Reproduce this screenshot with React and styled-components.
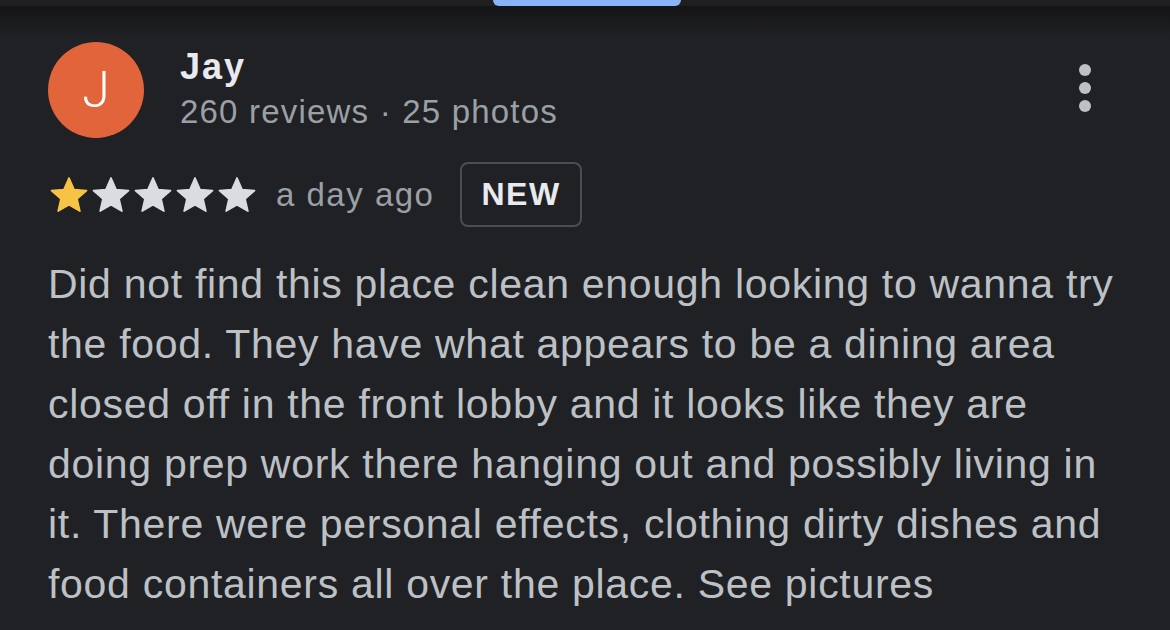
import React from 'react'
import styled, { createGlobalStyle } from 'styled-components'

const GlobalStyle = createGlobalStyle`
  html, body {
    margin: 0;
    padding: 0;
    background: #202124;
  }
  body {
    width: 1170px;
    height: 630px;
    overflow: hidden;
  }
`

const Page = styled.div`
  width: 1170px;
  height: 630px;
  background: #202124;
  display: flex;
  flex-direction: column;
  font-family: "Liberation Sans", Arimo, Arial, sans-serif;
`

const TopBar = styled.div`
  height: 6px;
  background: #1f1f1f;
  display: flex;
  justify-content: center;
  position: relative;
  &::after {
    content: '';
    position: absolute;
    left: 0;
    right: 0;
    top: 6px;
    height: 30px;
    background: linear-gradient(#141416, rgba(32, 33, 36, 0));
  }
`

const Tab = styled.div`
  width: 188px;
  height: 6px;
  margin-left: 4px;
  background: #8ab4f8;
  border-radius: 0 0 10px 10px;
`

const Review = styled.div`
  padding: 36px 48px 0 48px;
  display: flex;
  flex-direction: column;
`

const Header = styled.div`
  display: flex;
  align-items: flex-start;
`

const Avatar = styled.div`
  width: 96px;
  height: 96px;
  border-radius: 50%;
  background: #e2643b;
  color: #fff;
  font-family: Roboto, "Liberation Sans", sans-serif;
  font-size: 50px;
  font-weight: 300;
  display: flex;
  align-items: center;
  justify-content: center;
  flex-shrink: 0;
`

const Author = styled.div`
  margin-left: 36px;
  display: flex;
  flex-direction: column;
  flex: 1;
`

const Name = styled.div`
  color: #e8eaed;
  font-size: 36px;
  font-weight: 700;
  letter-spacing: 2px;
  line-height: 40px;
  margin-top: 5px;
`

const Meta = styled.div`
  color: #9aa0a6;
  font-size: 33px;
  letter-spacing: 1.2px;
  line-height: 40px;
  margin-top: 5px;
`

const Menu = styled.div`
  margin-top: 22px;
  margin-right: 31px;
  display: flex;
  flex-direction: column;
  gap: 6px;
`

const Dot = styled.span`
  width: 12px;
  height: 12px;
  border-radius: 50%;
  background: #bdc1c6;
`

const RatingRow = styled.div`
  display: flex;
  align-items: center;
  margin-top: 24px;
`

const Stars = styled.div`
  display: flex;
`

const When = styled.span`
  color: #9aa0a6;
  font-size: 33px;
  letter-spacing: 1.5px;
  margin-left: 18px;
`

const Badge = styled.span`
  margin-left: 26px;
  border: 2px solid #4a4d51;
  border-radius: 8px;
  height: 65px;
  box-sizing: border-box;
  padding: 0 19px;
  display: flex;
  align-items: center;
  color: #e8eaed;
  font-size: 32px;
  font-weight: 700;
  letter-spacing: 1.5px;
`

const Body = styled.p`
  margin: 27px 0 0;
  color: #bdc1c6;
  font-size: 41px;
  letter-spacing: 0.7px;
  line-height: 60px;
  white-space: nowrap;
`

const Star = ({ filled }) => (
  <svg width="42" height="42" viewBox="0 0 24 24">
    <path
      d="M12 2.3l2.9 6.6 7.1.6-5.4 4.7 1.6 7-6.2-3.7-6.2 3.7 1.6-7L2 9.5l7.1-.6z"
      fill={filled ? '#f6c344' : '#dadce0'}
      stroke={filled ? '#f6c344' : '#dadce0'}
      strokeLinejoin="round"
      strokeWidth="1"
    />
  </svg>
)

const lines = [
  'Did not find this place clean enough looking to wanna try',
  'the food. They have what appears to be a dining area',
  'closed off in the front lobby and it looks like they are',
  'doing prep work there hanging out and possibly living in',
  'it. There were personal effects, clothing dirty dishes and',
  'food containers all over the place. See pictures',
]

export default function App() {
  return (
    <Page>
      <GlobalStyle />
      <TopBar>
        <Tab />
      </TopBar>
      <Review>
        <Header>
          <Avatar>J</Avatar>
          <Author>
            <Name>Jay</Name>
            <Meta>260 reviews · 25 photos</Meta>
          </Author>
          <Menu>
            <Dot />
            <Dot />
            <Dot />
          </Menu>
        </Header>
        <RatingRow>
          <Stars>
            {[0, 1, 2, 3, 4].map((i) => (
              <Star key={i} filled={i < 1} />
            ))}
          </Stars>
          <When>a day ago</When>
          <Badge>NEW</Badge>
        </RatingRow>
        <Body>
          {lines.map((line, i) => (
            <React.Fragment key={i}>
              {line}
              {i < lines.length - 1 && <br />}
            </React.Fragment>
          ))}
        </Body>
      </Review>
    </Page>
  )
}
